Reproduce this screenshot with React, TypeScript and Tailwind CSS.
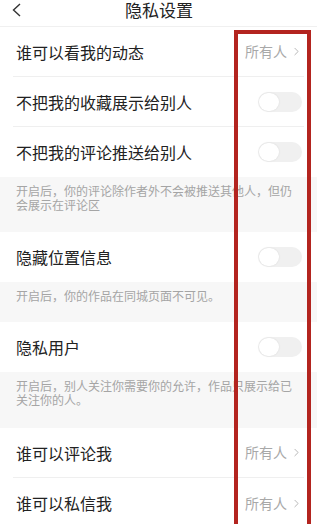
import { ChevronRight } from 'lucide-react';

const font = { fontFamily: '"Noto Sans CJK SC", "Noto Sans", sans-serif' };

function Toggle() {
  return (
    <div className="w-[44px] h-[20px] rounded-full bg-[#f0f0f0] p-[1px] flex items-center">
      <div className="w-[20px] h-[18px] rounded-full bg-white shadow-[0_0_2px_rgba(0,0,0,0.1)]" />
    </div>
  );
}

function Row({ label, value, toggle, line = true }: { label: string; value?: string; toggle?: boolean; line?: boolean }) {
  return (
    <div className="px-[16px] bg-white">
      <div className={`h-[50px] flex items-center justify-between ${line ? 'border-b border-[#efefef]' : ''} -mx-[3px] px-[3px]`}>
        <span className="text-[16px] text-[#222]">{label}</span>
        {toggle ? (
          <div className="mr-[-1px]"><Toggle /></div>
        ) : (
          <span className="flex items-center text-[14px] text-[#a8a8a8]">
            {value}
            <ChevronRight className="w-[13px] h-[13px] ml-[3px] mr-[-2px]" strokeWidth={1.5} />
          </span>
        )}
      </div>
    </div>
  );
}

function Note({ text, h }: { text: string; h: string }) {
  return (
    <div className={`bg-[#f7f7f7] px-[16px] pt-[7px] ${h}`}>
      <p className="text-[12px] leading-[14px] text-[#a5a5a5]">{text}</p>
    </div>
  );
}

export default function App() {
  return (
    <div className="relative w-[333px] h-[524px] overflow-hidden bg-white" style={font}>
      <div className="w-[317px]">
        <div className="h-[27px] relative flex items-start justify-center pt-[1px] border-b border-[#f0f0f0]">
          <svg className="absolute left-[11px] top-[3px]" width="11" height="14" viewBox="0 0 11 14" fill="none">
            <path d="M9 1L2.5 7L9 13" stroke="#333" strokeWidth="1.4" />
          </svg>
          <span className="text-[17px] leading-[18px] text-[#222] ml-[1px]">隐私设置</span>
        </div>
        <Row label="谁可以看我的动态" value="所有人" />
        <Row label="不把我的收藏展示给别人" toggle />
        <Row label="不把我的评论推送给别人" toggle line={false} />
        <Note h="h-[55px]" text="开启后，你的评论除作者外不会被推送其他人，但仍会展示在评论区" />
        <Row label="隐藏位置信息" toggle line={false} />
        <Note h="h-[40px]" text="开启后，你的作品在同城页面不可见。" />
        <Row label="隐私用户" toggle line={false} />
        <Note h="h-[56px]" text="开启后，别人关注你需要你的允许，作品只展示给已关注你的人。" />
        <Row label="谁可以评论我" value="所有人" />
        <Row label="谁可以私信我" value="所有人" line={false} />
      </div>
      <div className="absolute left-[234px] top-[30px] w-[77px] h-[520px] border-[4px] border-[#b3241f]" />
    </div>
  );
}
